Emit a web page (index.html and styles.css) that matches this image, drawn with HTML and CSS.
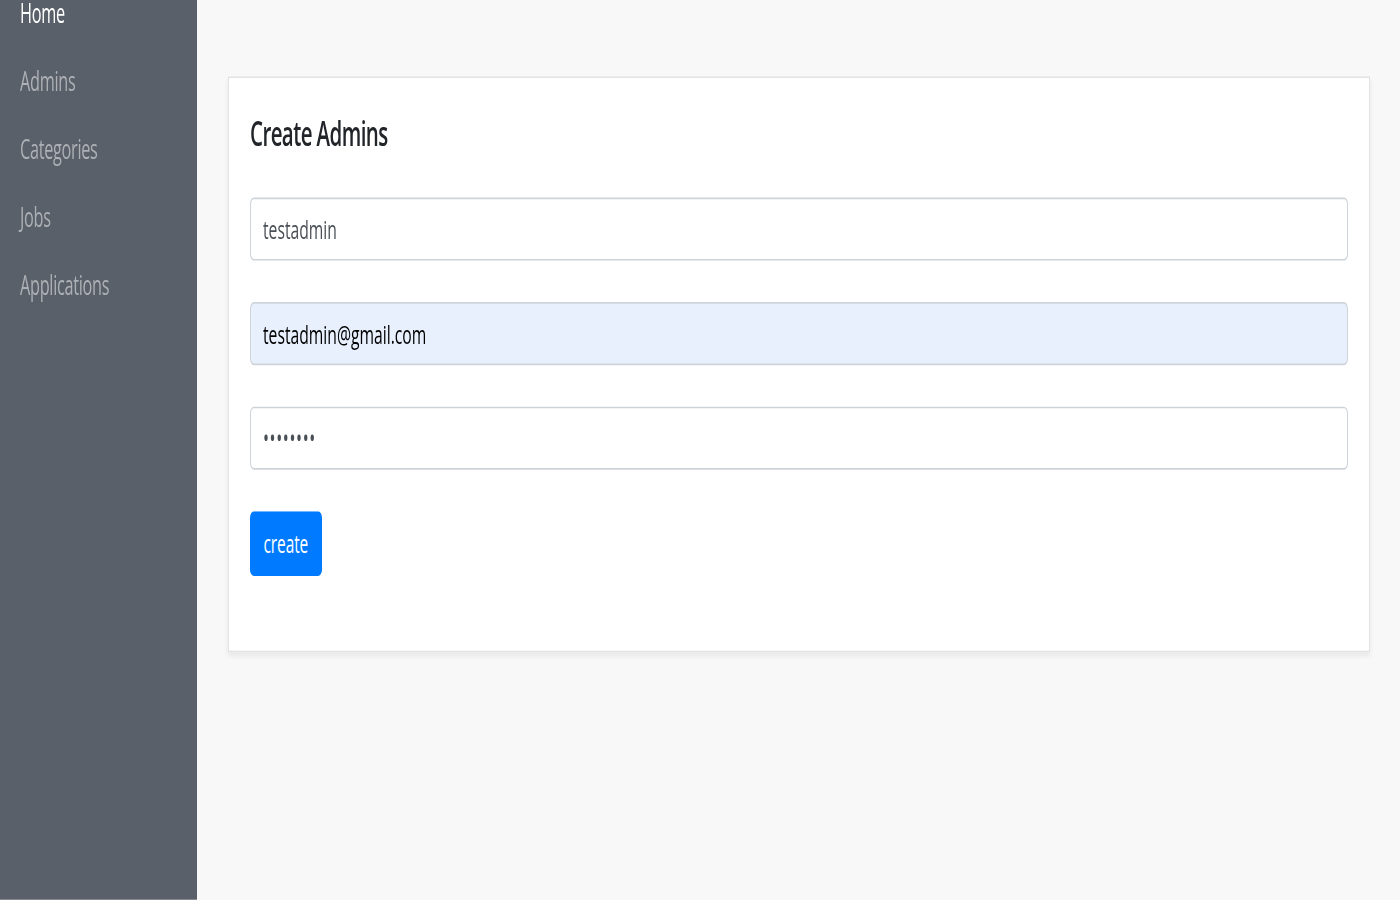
FILE: index.html
```html
<!DOCTYPE html>
<html lang="en">
<head>
<meta charset="utf-8">
<title>Create Admins</title>
<link rel="stylesheet" href="styles.css">
</head>
<body>
<div class="page">
  <aside class="sidebar">
    <nav class="nav">
      <a class="nav-link active" href="#">Home</a>
      <a class="nav-link" href="#">Admins</a>
      <a class="nav-link" href="#">Categories</a>
      <a class="nav-link" href="#">Jobs</a>
      <a class="nav-link" href="#">Applications</a>
    </nav>
  </aside>
  <main class="main">
    <section class="card">
      <h3 class="card-title">Create Admins</h3>
      <form class="form">
        <div class="form-group"><input class="form-control" type="text" value="testadmin"></div>
        <div class="form-group"><input class="form-control autofill" type="email" value="testadmin@gmail.com"></div>
        <div class="form-group"><input class="form-control" type="password" value="password"></div>
        <button class="btn" type="button">create</button>
      </form>
    </section>
  </main>
</div>
</body>
</html>
```
FILE: styles.css
```css
* { box-sizing: border-box; }
html, body { margin: 0; padding: 0; overflow: hidden; height: 900px; }
body {
  font-family: "Open Sans", "Noto Sans", sans-serif;
  background: #f8f8f8;
  color: #212529;
}
.page {
  width: 1400px;
  height: 542.2px;
  display: flex;
  transform: scaleY(1.66);
  transform-origin: 0 0;
}
.sidebar {
  width: 197px;
  flex: none;
  background: #5a6069;
  height: 100%;
}
.nav {
  display: flex;
  flex-direction: column;
  margin-top: -12.5px;
}
.nav-link {
  display: block;
  padding: 8px 20px;
  line-height: 25px;
  font-size: 16.3px;
  color: #adb0b5;
  text-decoration: none;
  letter-spacing: -0.3px;
}
.nav-link.active { color: #ffffff; }
.main {
  flex: 1;
  padding: 45.8px 30px 0 31px;
}
.card {
  background: #fff;
  border: 1px solid #e3e3e3;
  box-shadow: 0 2px 4px rgba(0,0,0,0.07);
  padding: 20px 21px 45.5px;
}
.card-title {
  margin: 0 0 25.3px;
  font-size: 20.5px;
  font-weight: 600;
  line-height: 26.4px;
  color: #212529;
  letter-spacing: -0.6px;
}
.form-group { margin-bottom: 25.2px; }
.form-control {
  display: block;
  width: 100%;
  height: 38px;
  padding: 6px 12px;
  font-family: inherit;
  font-size: 15.7px;
  line-height: 24px;
  color: #495057;
  background: #fff;
  border: 1px solid #ced4da;
  border-radius: 4px;
  outline: none;
  letter-spacing: 0;
}
.form-control.autofill { background: #e8f0fe; color: #000; }
.form-control[type="password"] { color: #495057; letter-spacing: 0.6px; font-size: 16px; }
.btn {
  display: inline-block;
  height: 38.6px;
  padding: 6px 12.5px;
  font-family: inherit;
  font-size: 15.5px;
  line-height: 24px;
  color: #fff;
  background: #007bff;
  border: 1px solid #007bff;
  border-radius: 4px;
  letter-spacing: -0.1px;
}
```
